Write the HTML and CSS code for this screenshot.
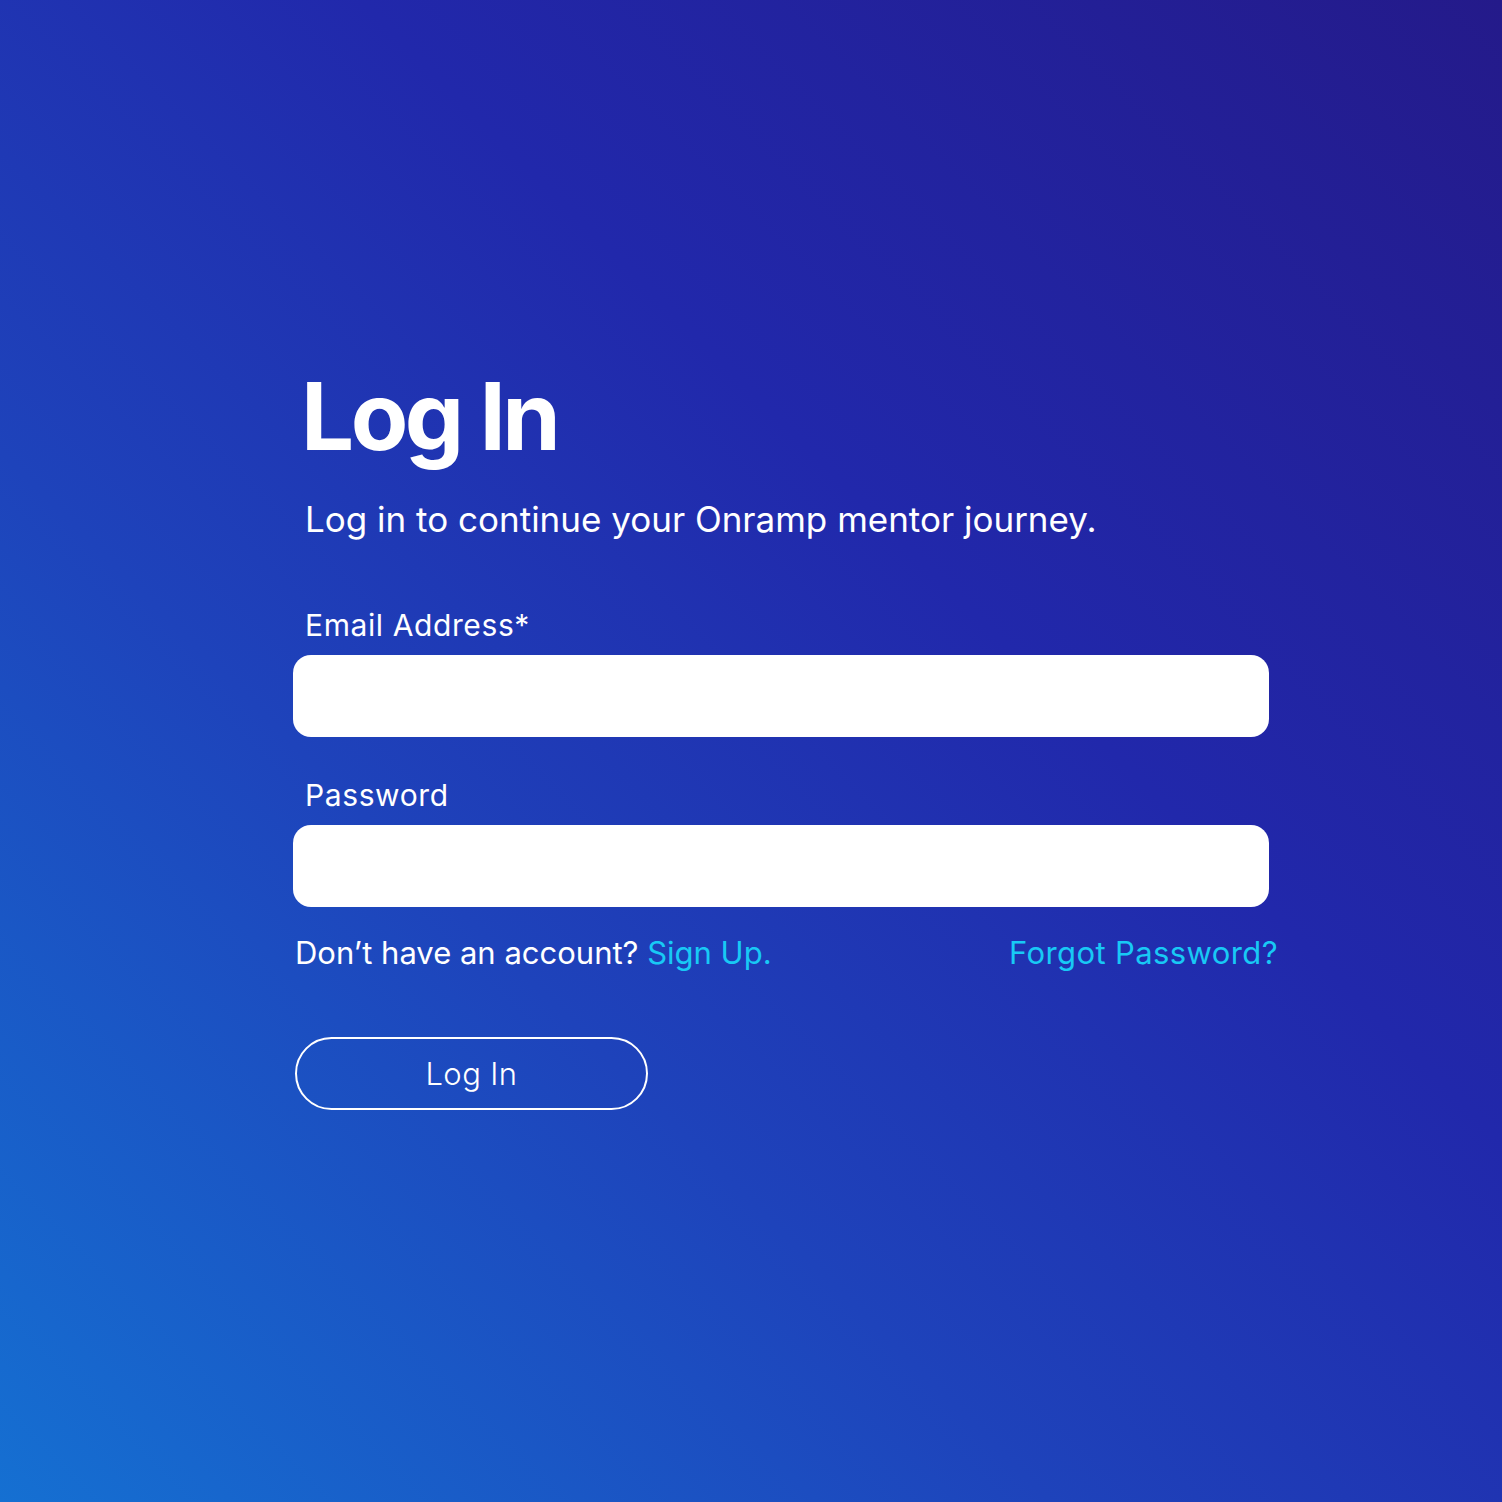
FILE: index.html
```html
<!DOCTYPE html>
<html lang="en">
<head>
<meta charset="utf-8">
<title>Log In</title>
<link rel="stylesheet" href="styles.css">
</head>
<body>
<main class="page">
  <section class="panel">
    <h1 class="title">Log In</h1>
    <p class="subtitle">Log in to continue your Onramp mentor journey.</p>
    <form class="form">
      <label class="label" for="email">Email Address*</label>
      <input class="field" id="email" type="email">
      <label class="label label-pw" for="pw">Password</label>
      <input class="field" id="pw" type="password">
      <div class="links">
        <span class="signup">Don’t have an account? <a class="link" href="#">Sign Up.</a></span>
        <a class="link link-forgot" href="#">Forgot Password?</a>
      </div>
      <button class="btn" type="button">Log In</button>
    </form>
  </section>
</main>
</body>
</html>
```
FILE: styles.css
```css
html, body {
  margin: 0;
  padding: 0;
}
body {
  width: 1502px;
  height: 1502px;
  overflow: hidden;
  font-family: "Inter", "Noto Sans", sans-serif;
  color: #ffffff;
}
.page {
  width: 1502px;
  height: 1502px;
  background: linear-gradient(to top right, #1570d2 0%, #1e43bb 35%, #2128ab 62%, #241a8a 100%);
  box-sizing: border-box;
  padding-top: 360px;
  padding-left: 293px;
}
.panel {
  width: 976px;
}
.title {
  margin: 0 0 0 8px;
  font-size: 94px;
  font-weight: 700;
  letter-spacing: -3.5px;
  line-height: 112px;
}
.subtitle {
  margin: 25px 0 0 12px;
  font-size: 35px;
  font-weight: 400;
  letter-spacing: 0;
  line-height: 44px;
}
.form {
  display: flex;
  flex-direction: column;
  margin-top: 64px;
}
.label {
  margin-left: 12px;
  font-size: 30px;
  letter-spacing: 0.6px;
  line-height: 40px;
  margin-bottom: 10px;
}
.label-pw {
  margin-top: 38px;
}
.field {
  display: block;
  width: 976px;
  height: 82px;
  box-sizing: border-box;
  border: none;
  border-radius: 18px;
  background: #ffffff;
  margin: 0;
  padding: 0 20px;
  font-size: 28px;
  outline: none;
}
.links {
  display: flex;
  justify-content: space-between;
  width: 983px;
  margin-top: 26px;
  margin-left: 2px;
  font-size: 31px;
  line-height: 40px;
}
.signup {
  color: #ffffff;
  letter-spacing: 0;
}
.link {
  color: #18c9f5;
  text-decoration: none;
}
.link-forgot {
  letter-spacing: 0.4px;
}
.btn {
  margin-top: 64px;
  margin-left: 2px;
  width: 353px;
  height: 73px;
  box-sizing: border-box;
  border: 2px solid #ffffff;
  border-radius: 37px;
  background: transparent;
  color: #ffffff;
  font-family: "Inter", "Noto Sans", sans-serif;
  font-size: 31px;
  font-weight: 300;
  letter-spacing: 0.4px;
  padding: 0;
}
```
